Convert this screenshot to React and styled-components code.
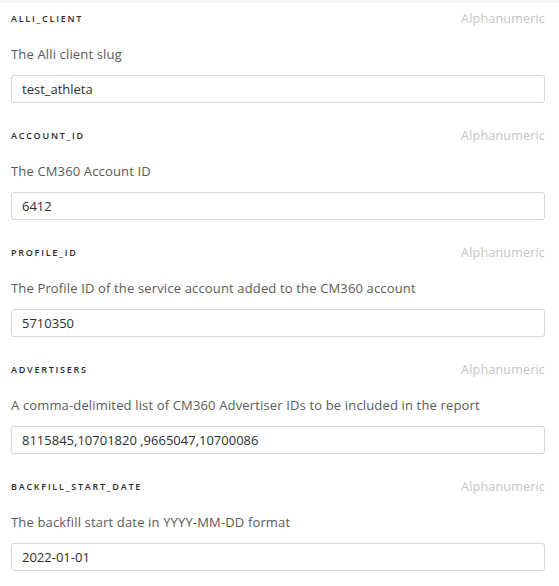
import React from 'react';
import styled, { createGlobalStyle } from 'styled-components';

const GlobalStyle = createGlobalStyle`
  body {
    margin: 0;
    background: #fff;
    font-family: 'Open Sans', 'Liberation Sans', sans-serif;
  }
`;

const fields = [
  { name: 'ALLI_CLIENT', description: 'The Alli client slug', value: 'test_athleta' },
  { name: 'ACCOUNT_ID', description: 'The CM360 Account ID', value: '6412' },
  {
    name: 'PROFILE_ID',
    description: 'The Profile ID of the service account added to the CM360 account',
    value: '5710350',
  },
  {
    name: 'ADVERTISERS',
    description: 'A comma-delimited list of CM360 Advertiser IDs to be included in the report',
    value: '8115845,10701820 ,9665047,10700086',
  },
  {
    name: 'BACKFILL_START_DATE',
    description: 'The backfill start date in YYYY-MM-DD format',
    value: '2022-01-01',
  },
];

const Panel = styled.div`
  width: 559px;
  height: 586px;
  overflow: hidden;
  box-sizing: border-box;
  padding: 0 14px 0 11px;
  border-top: 3px solid #f5f5f5;
`;

const Field = styled.div`
  display: flex;
  flex-direction: column;
  padding: ${(props) => (props.first ? '7px' : '10px')} 0 14px;
`;

const Header = styled.div`
  display: flex;
  justify-content: space-between;
  align-items: center;
  height: 16px;
`;

const Name = styled.span`
  font-size: 9px;
  font-weight: 600;
  letter-spacing: 1.75px;
  color: #2b2b2b;
`;

const Type = styled.span`
  font-size: 12.5px;
  color: #c4c4c4;
  letter-spacing: 0.2px;
`;

const Description = styled.p`
  margin: 19px 0 12px;
  font-size: 13px;
  line-height: 18px;
  letter-spacing: 0.15px;
  color: #5a5a5a;
`;

const Input = styled.input`
  box-sizing: border-box;
  height: 28px;
  width: 100%;
  padding: 0 10px;
  border: 1px solid #d6d6d6;
  border-radius: 3px;
  font-family: inherit;
  font-size: 13px;
  color: #2e2e2e;
  background: #fff;
  outline: none;
`;

export default function App() {
  return (
    <>
      <GlobalStyle />
      <Panel>
        {fields.map((f, i) => (
          <Field key={f.name} first={i === 0}>
            <Header>
              <Name>{f.name}</Name>
              <Type>Alphanumeric</Type>
            </Header>
            <Description>{f.description}</Description>
            <Input defaultValue={f.value} readOnly />
          </Field>
        ))}
      </Panel>
    </>
  );
}
